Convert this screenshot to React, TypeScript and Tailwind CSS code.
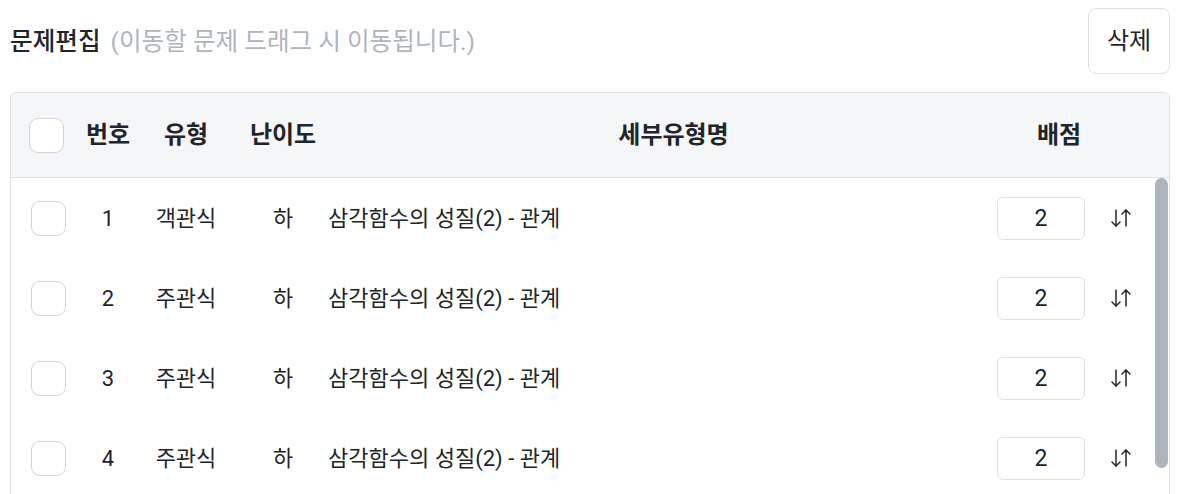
import { ArrowDownUp } from "lucide-react";

type Question = {
  no: number;
  type: string;
  level: string;
  detail: string;
  score: number;
};

const questions: Question[] = [
  { no: 1, type: "객관식", level: "하", detail: "삼각함수의 성질(2) - 관계", score: 2 },
  { no: 2, type: "주관식", level: "하", detail: "삼각함수의 성질(2) - 관계", score: 2 },
  { no: 3, type: "주관식", level: "하", detail: "삼각함수의 성질(2) - 관계", score: 2 },
  { no: 4, type: "주관식", level: "하", detail: "삼각함수의 성질(2) - 관계", score: 2 },
];

const Checkbox = () => (
  <span className="block w-[35px] h-[35px] rounded-[9px] border border-[#ced4da] bg-white" />
);

const App = () => {
  return (
    <div
      className="w-[1180px] h-[494px] overflow-hidden bg-white px-[10px] pt-[8px] text-[#212529]"
      style={{ fontFamily: 'Roboto, "Noto Sans CJK KR", sans-serif' }}
    >
      <div className="flex items-center justify-between">
        <h2 className="flex items-baseline gap-[10px] pt-[3px] text-[24.6px] font-medium">
          문제편집
          <span className="font-normal text-[#adb5bd]">(이동할 문제 드래그 시 이동됩니다.)</span>
        </h2>
        <button className="w-[82px] h-[66px] rounded-lg border border-[#dee2e6] bg-white text-[24px]">
          삭제
        </button>
      </div>

      <div className="mt-[18px] rounded-t-md border border-[#dee2e6] overflow-hidden">
        <div className="flex items-center h-[85px] bg-[#f5f6f8] border-b border-[#dee2e6] text-[24px] font-bold">
          <div className="w-[73px] pl-[18px]">
            <Checkbox />
          </div>
          <div className="w-[48px] text-center">번호</div>
          <div className="w-[108px] text-center">유형</div>
          <div className="w-[86px] text-center">난이도</div>
          <div className="w-[695px] text-center">세부유형명</div>
          <div className="w-[76px] text-center">배점</div>
        </div>

        <div className="flex h-[320px]">
          <div className="flex-1">
            {questions.map((q) => (
              <div key={q.no} className="flex items-center h-[80px] text-[22px]">
                <div className="w-[73px] pl-[20px]">
                  <Checkbox />
                </div>
                <div className="w-[48px] text-center">{q.no}</div>
                <div className="w-[108px] text-center">{q.type}</div>
                <div className="w-[86px] text-center">{q.level}</div>
                <div className="flex-1 pl-[2px]">{q.detail}</div>
                <input
                  defaultValue={q.score}
                  className="w-[88px] h-[43px] rounded-md border border-[#dee2e6] text-center text-[23px] outline-none"
                />
                <div className="ml-[24px] mr-[20px] w-[24px] flex justify-center">
                  <ArrowDownUp size={24} strokeWidth={1.5} className="text-[#212529]" />
                </div>
              </div>
            ))}
          </div>
          <div className="w-[16px] pl-[2px] pr-[1px]">
            <div className="h-[290px] rounded-full bg-[#adb5bd]" />
          </div>
        </div>
      </div>
    </div>
  );
};

export default App;
